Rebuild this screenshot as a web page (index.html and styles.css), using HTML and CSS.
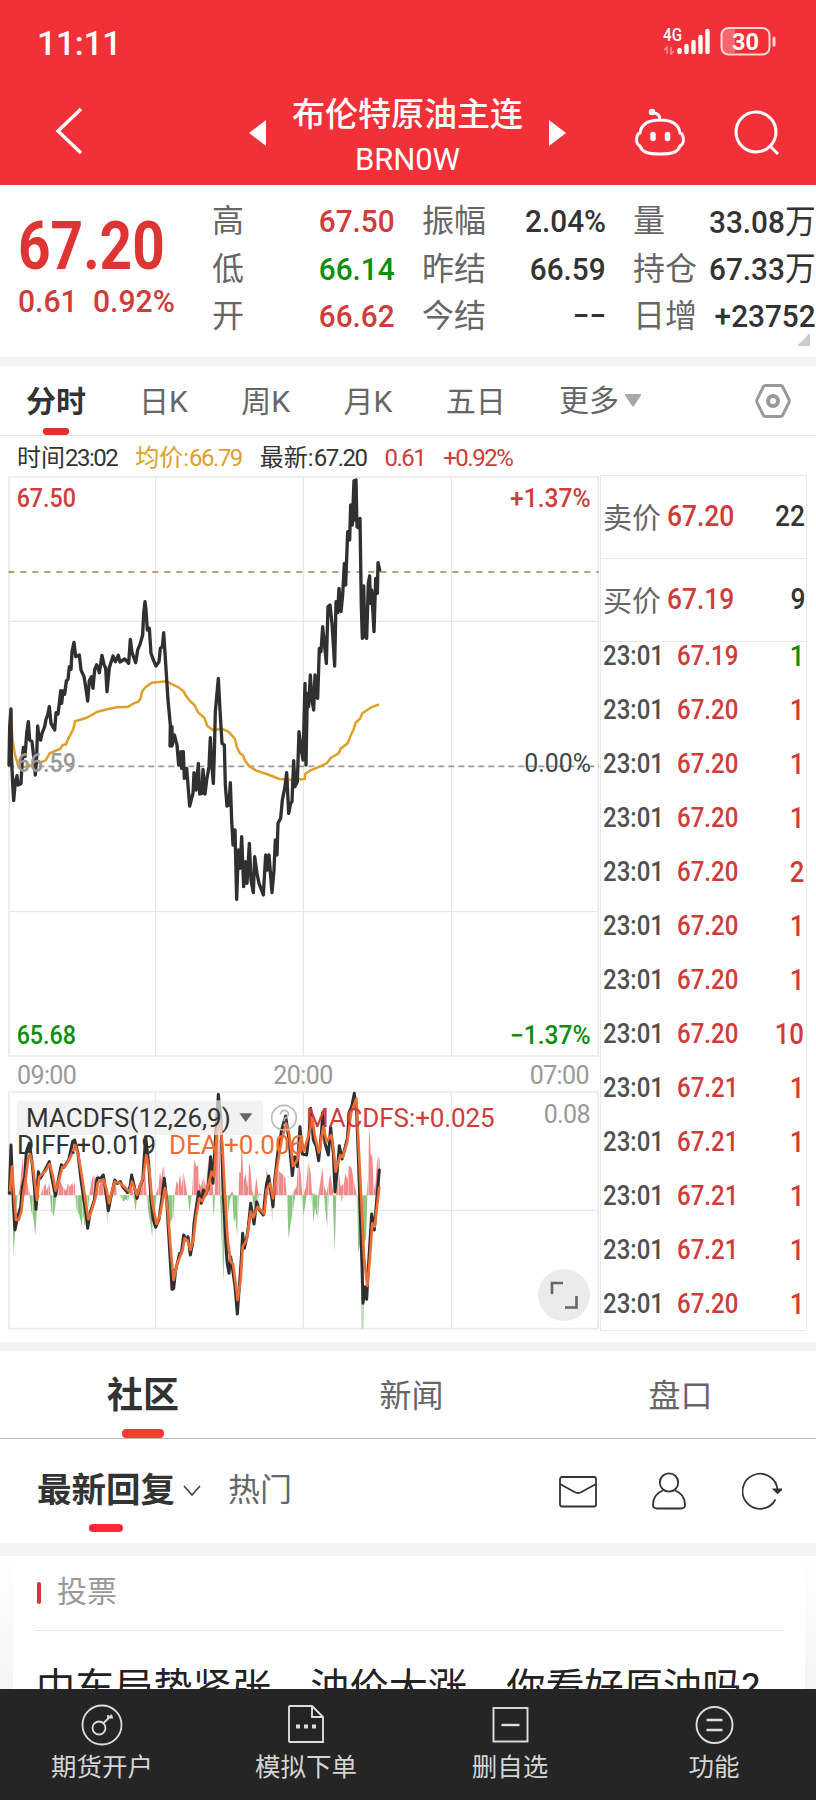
FILE: index.html
```html
<!DOCTYPE html>
<html lang="zh-CN">
<head>
<meta charset="utf-8">
<title>布伦特原油主连</title>
<link rel="stylesheet" href="styles.css">
</head>
<body>
<header class="top">
  <div class="status">
    <span class="clock">11:11</span>
    <svg class="signal" width="116" height="40" viewBox="660 22 116 40">
      <text x="662" y="41" font-size="18" font-weight="500" fill="#fff" textLength="19" lengthAdjust="spacingAndGlyphs">4G</text>
      <g stroke="#ff9a9e" stroke-width="1.3" fill="none"><path d="M666 54V47l-3 3M670 47v7l3-3"/></g>
      <g stroke="#fff" stroke-width="4.4" stroke-linecap="round"><path d="M678.5 50v2M685.5 46v6M692.5 42v10M699.500 37v15M706.500 31v21"/></g>
      <path d="M734 29h-7q-6 0-6 6v12q0 6 6 6h7z" fill="#f4686c"/>
      <rect x="720.500" y="28" width="48" height="26.500" rx="7" fill="none" stroke="#ffd5d6" stroke-width="2"/>
      <path d="M773 38v7" stroke="#ffd5d6" stroke-width="3" stroke-linecap="round"/>
      <text x="731" y="50" font-size="24" font-weight="700" fill="#fff" textLength="27" lengthAdjust="spacingAndGlyphs">30</text>
    </svg>
  </div>
  <nav class="nav">
    <svg class="back" width="30" height="50" viewBox="0 0 30 50"><path d="M26 4L3 26l23 22" fill="none" stroke="#fff" stroke-width="3.400"/></svg>
    <svg class="tri-l" width="17" height="26" viewBox="0 0 17 26"><path d="M17 0v26L0 13z" fill="#fff"/></svg>
    <div class="title"><div class="name">布伦特原油主连</div><div class="code">BRN0W</div></div>
    <svg class="tri-r" width="17" height="26" viewBox="0 0 17 26"><path d="M0 0v26l17-13z" fill="#fff"/></svg>
    <svg class="robot" width="52" height="48" viewBox="633 108 52 48" fill="none" stroke="#fff" stroke-width="3">
      <path d="M659 120c14 0 19 6 20 13c4 1 5 11 0 13c-2 6-7 8-20 8s-18-2-20-8c-5-2-4-12 0-13c1-7 6-13 20-13zM659 120c0-4-2-7-7-7"/>
      <circle cx="651" cy="112" r="2.500" fill="#fff" stroke-width="1.500"/>
      <path d="M652 134.500v4M666.500 134.500v4" stroke-width="5.500" stroke-linecap="round"/>
    </svg>
    <svg class="search" width="46" height="46" viewBox="732 109 46 46" fill="none" stroke="#fff" stroke-width="3"><circle cx="755" cy="132" r="20"/><path d="M769 146l8 8"/></svg>
  </nav>
</header>

<section class="quote">
  <div class="last">
    <div class="price"><span>67.20</span></div>
    <div class="delta"><span>0.61</span><span>0.92%</span></div>
  </div>
  <div class="stats">
    <div class="stat"><span>高</span><b class="up">67.50</b></div>
    <div class="stat"><span>振幅</span><b>2.04%</b></div>
    <div class="stat"><span>量</span><b>33.08<i>万</i></b></div>
    <div class="stat"><span>低</span><b class="down">66.14</b></div>
    <div class="stat"><span>昨结</span><b>66.59</b></div>
    <div class="stat"><span>持仓</span><b>67.33<i>万</i></b></div>
    <div class="stat"><span>开</span><b class="up">66.62</b></div>
    <div class="stat"><span>今结</span><b class="none">−−</b></div>
    <div class="stat"><span>日增</span><b>+23752</b></div>
  </div>
  <svg class="corner" width="13" height="13" viewBox="0 0 13 13"><path d="M13 0v13H0z" fill="#ccc"/></svg>
</section>

<div class="tabs">
  <span class="tab on">分时</span><span class="tab">日K</span><span class="tab">周K</span><span class="tab">月K</span><span class="tab">五日</span><span class="tab more">更多<svg width="16" height="13" viewBox="0 0 16 13"><path d="M1 0h14q2 0 .5 2L9 12q-1 1-2 0L.5 2Q-1 0 1 0z" fill="#a8a8a8"/></svg></span>
  <svg class="gear" width="36" height="36" viewBox="0 0 36 36" fill="none" stroke="#999" stroke-width="3"><path d="M10.500 2.500h15q1.500 0 2 1l6.500 13q.500 1.500 0 3l-6.500 13q-.500 1-2 1h-15q-1.500 0-2-1L2 19.500q-.500-1.500 0-3l6.500-13q.500-1 2-1z"/><circle cx="18" cy="18" r="5" stroke-width="4"/></svg>
</div>

<div class="info"><span>时间<em>23:02</em></span><span class="avg">均价:<em>66.79</em></span><span>最新:<em>67.20</em></span><span class="up"><em>0.61</em></span><span class="up"><em>+0.92%</em></span></div>

<main class="market">
  <div class="charts">
    <svg class="minute" width="600" height="585" viewBox="0 15 1800 1755">
      <g stroke="#e2e2e2" stroke-width="3" fill="none"><path d="M467 20V1758M910 20V1758M1354 20V1758M25 454H1795M25 1325H1795"/></g>
      <path d="M27 1758V21H1795V1758z" fill="none" stroke="#e9e9e9" stroke-width="5"/>
      <path d="M25 306H1797" stroke="#b5a272" stroke-width="5.500" stroke-dasharray="18 18"/>
      <path d="M25 889H1797" stroke="#999" stroke-width="5" stroke-dasharray="18 12"/>
      <path d="M32 720L38 810L44 850L56 893L76 890L100 884L120 878L137 871L149 850L180 837L188 825L198 823L204 808L220 777L225 754L258 744L293 725L325 717L350 712L385 710L400 701L415 695L422 685L426 665L436 652L455 638L500 634L520 645L534 651L551 664L557 676L570 693L583 705L595 728L613 743L622 768L640 781L664 776L685 785L705 807L711 833L720 850L729 856L734 870L747 888L767 901L800 912L838 927L870 929L914 927L916 911L930 902L959 890L980 880L993 863L1016 850L1022 836L1043 820L1053 794L1060 780L1067 758L1080 746L1087 730L1112 713L1137 703" fill="none" stroke="#dea02a" stroke-width="7.500"/>
      <path d="M27 885L29 770L33 717L34 850L38 940L41 992L46 935L51 917L54 945L63 941L66 880L70 832L75 860L80 790L85 755L89 810L96 815L101 860L106 915L110 860L113 768L117 805L122 810L126 790L134 770L138 748L143 735L148 710L153 760L164 780L168 728L174 732L178 700L182 662L185 700L189 663L194 673L199 633L204 628L208 590L213 598L216 545L222 517L227 560L238 555L243 600L252 620L257 650L263 693L268 632L274 620L279 655L284 598L290 584L298 608L306 556L312 584L317 594L321 665L328 593L339 558L346 575L355 556L360 576L374 567L386 580L391 508L396 548L407 578L413 540L421 520L428 495L431 430L435 395L438 420L442 480L448 475L453 550L461 572L468 588L477 575L481 535L487 530L491 488L497 580L504 690L511 765L510 828L516 770L516 828L523 795L531 825L536 885L543 845L545 895L550 845L553 925L560 895L569 1008L575 985L579 970L582 908L588 960L595 880L599 972L606 970L609 898L615 972L620 930L627 890L631 803L635 880L640 940L643 850L646 725L655 625L660 720L666 820L673 825L676 945L681 1008L687 1005L691 938L695 1050L699 1125L705 1080L710 1288L715 1140L720 1195L725 1100L731 1250L736 1175L741 1240L748 1120L753 1230L760 1268L764 1160L771 1210L777 1240L784 1258L790 1275L797 1155L802 1200L807 1155L816 1268L822 1200L826 1110L831 1155L834 1060L842 1045L847 990L855 950L860 908L866 1030L872 1000L876 995L881 872L885 950L892 935L897 785L904 840L909 870L915 640L918 885L922 670L926 710L931 615L936 690L941 720L945 615L948 680L953 685L958 535L963 545L968 470L973 520L979 580L984 410L990 405L996 460L1004 588L1008 395L1013 428L1017 355L1023 425L1028 375L1033 280L1037 345L1043 185L1049 210L1052 105L1057 165L1062 32L1063 150L1065 32L1068 30L1071 170L1077 175L1080 145L1084 410L1087 505L1091 348L1095 500L1100 505L1105 340L1109 318L1111 400L1115 360L1122 485L1127 325L1132 370L1134 278L1139 300" fill="none" stroke="#303030" stroke-width="10" stroke-linejoin="round" stroke-linecap="round"/>
      <g class="lbl">
        <text class="c-up" x="50" y="110" textLength="178" lengthAdjust="spacingAndGlyphs">67.50</text>
        <text class="c-up" x="1530" y="110" textLength="242" lengthAdjust="spacingAndGlyphs">+1.37%</text>
        <text class="c-gray" x="50" y="906" textLength="178" lengthAdjust="spacingAndGlyphs">66.59</text>
        <text class="c-dark" x="1573" y="906" textLength="200" lengthAdjust="spacingAndGlyphs">0.00%</text>
        <text class="c-down" x="50" y="1722" textLength="178" lengthAdjust="spacingAndGlyphs">65.68</text>
        <text class="c-down" x="1530" y="1722" textLength="242" lengthAdjust="spacingAndGlyphs">−1.37%</text>
      </g>
    </svg>
    <svg class="macd" width="600" height="272" viewBox="0 60 1800 816">
      <defs>
        <pattern id="bars-up" width="15" height="20" patternUnits="userSpaceOnUse"><path d="M0 0H15V20H0z" fill="#f08a8b"/><path d="M9 0h3v20H9z" fill="#f8bfc0"/></pattern>
        <pattern id="bars-down" width="15" height="20" patternUnits="userSpaceOnUse"><path d="M0 0H15V20H0z" fill="#8cc682"/><path d="M6 0h3v20H6z" fill="#bfe0b9"/></pattern>
      </defs>
      <g stroke="#e2e2e2" stroke-width="3"><path d="M467 157V866M910 157V866M1354 157V866M25 511H1795"/></g>
      <path d="M27 156H1795V866H27z" fill="none" stroke="#e9e9e9" stroke-width="5"/>
      <path d="M27 466L33 300L38 420L40 466zM55 466L60 440L65 380L69 350L73 400L77 375L80 420L84 440L90 466zM122 466L128 448L136 430L140 452L148 428L152 466zM170 466L178 415L188 440L198 452L204 430L210 440L217 428L220 440L225 425L226 466zM268 466L276 415L282 404L287 430L292 400L298 440L308 402L312 440L318 466zM335 466L341 445L348 430L350 466zM388 466L394 436L398 450L404 466zM412 466L422 440L428 400L433 350L438 440L440 466zM467 466L475 440L480 395L484 420L488 385L492 378L496 440L500 466zM524 466L530 422L535 435L540 405L545 440L550 395L556 430L562 466zM576 466L580 390L584 358L588 380L595 375L598 430L603 440L610 412L618 440L626 350L633 345L636 410L641 466L644 466L650 280L654 180L658 300L662 466zM688 466L696 455L704 466zM715 466L718 395L722 400L725 305L731 425L736 400L742 440L748 368L751 385L756 450L761 466zM763 466L769 412L775 460L790 466L797 440L800 385L805 420L812 440L820 466L826 420L832 360L838 395L844 400L850 405L856 415L860 466zM876 466L883 450L890 440L895 350L902 400L907 466L910 466L918 440L925 365L932 400L936 460L955 466L962 420L967 385L973 440L980 460L985 430L991 402L997 440L1002 466zM1008 466L1017 400L1022 440L1032 430L1036 400L1042 420L1046 375L1055 385L1063 430L1070 466zM1100 466L1104 420L1106 300L1109 268L1112 340L1117 350L1121 430L1125 450L1130 380L1135 345L1139 360L1140 466z" fill="url(#bars-up)"/>
      <path d="M36 466L41 650L46 560L50 500L54 466zM88 466L94 515L100 530L106 588L110 515L115 480L120 466zM150 466L154 515L160 530L166 500L169 466zM226 466L230 510L238 525L245 558L250 525L254 560L259 520L264 515L268 466zM318 466L322 555L328 490L334 466zM360 466L370 485L378 478L384 484L388 466zM400 466L407 512L412 466zM440 466L445 515L452 555L457 594L462 530L468 480L470 466zM500 466L506 580L512 545L520 530L524 466zM563 466L569 515L575 466zM637 466L641 530L645 466zM660 466L665 600L670 725L674 600L680 610L684 520L690 480L696 466L702 550L706 530L712 595L716 466zM755 466L762 500L767 480L773 480L777 466zM812 466L817 548L822 466zM860 466L866 598L872 550L879 510L886 466zM904 466L911 528L914 505L920 466zM934 466L941 548L945 500L950 525L954 535L959 466zM972 466L978 530L982 565L986 466zM998 466L1004 636L1009 466zM1022 466L1026 488L1030 466zM1070 466L1075 640L1082 600L1085 866L1090 866L1093 610L1098 595L1103 466z" fill="url(#bars-down)"/>
      <path d="M28 460L33 315L40 490L45 570L52 535L62 500L67 440L74 412L79 335L88 310L96 365L103 440L108 508L115 395L121 415L135 390L148 365L155 410L166 468L175 420L184 374L191 382L206 360L218 305L224 300L234 340L243 420L250 470L258 520L263 565L270 520L283 480L291 415L304 413L310 405L318 460L325 512L332 475L344 420L352 430L361 425L368 440L383 458L390 440L395 405L402 435L411 475L419 440L428 420L437 290L446 370L453 480L459 535L467 562L477 538L485 480L493 415L500 480L510 650L516 748L521 746L527 690L539 640L544 640L551 585L558 600L564 590L571 645L578 610L582 550L589 500L596 455L604 490L610 450L616 465L624 445L632 350L639 430L646 300L655 163L663 240L669 450L677 600L681 665L687 700L692 650L698 690L705 740L712 822L718 740L723 670L728 580L733 625L741 590L745 560L752 490L762 552L770 485L777 508L790 525L796 460L800 430L806 408L812 450L819 500L824 420L833 340L845 270L857 228L867 300L877 407L884 350L892 380L900 260L907 342L920 345L928 270L932 205L940 300L949 320L956 362L965 270L968 218L975 310L985 345L992 262L1000 340L1005 456L1012 390L1018 317L1026 357L1036 320L1042 295L1048 215L1055 200L1063 160L1070 220L1076 380L1082 550L1086 680L1089 790L1096 740L1100 778L1107 650L1115 522L1123 570L1130 480L1138 390" fill="none" stroke="#303030" stroke-width="9" stroke-linejoin="round" stroke-linecap="round"/>
      <path d="M30 455L36 380L41 450L48 540L56 540L64 515L70 460L78 410L84 360L90 342L98 375L105 430L111 480L118 410L137 392L149 372L158 405L167 452L177 420L187 382L196 378L212 350L226 315L236 350L246 410L254 465L265 538L272 520L286 475L293 428L310 418L320 450L327 490L344 425L362 430L370 438L388 455L396 425L411 465L421 435L430 410L439 345L448 390L457 490L470 552L480 525L495 444L504 520L514 650L521 720L532 670L548 630L554 595L563 602L571 630L580 600L588 530L598 475L607 484L620 455L635 395L643 410L650 280L660 235L668 330L674 450L683 600L692 665L699 672L707 730L713 780L722 720L728 620L740 600L752 515L760 532L773 500L793 522L800 450L810 430L819 475L828 400L845 300L858 250L867 280L879 378L892 360L903 290L912 332L930 270L936 232L945 290L957 338L970 260L980 305L994 285L1001 330L1007 395L1021 345L1028 352L1042 305L1053 220L1069 175L1075 300L1083 460L1092 650L1102 738L1110 650L1117 550L1124 560L1131 500L1138 440" fill="none" stroke="#ee6d35" stroke-width="8" stroke-linejoin="round"/>
      <rect x="51" y="181" width="738" height="104" rx="9" fill="#ececec" fill-opacity=".7"/>
      <path d="M718 220h39l-20 26z" fill="#666"/>
      <g fill="none" stroke="#bbb" stroke-width="5"><circle cx="852" cy="233" r="37"/><path d="M841 224q2-13 12-13q13 1 12 13q-1 8-12 12v8M853 251v7"/></g>
    </svg>
    <div class="axis"><span>09:00</span><span>20:00</span><span>07:00</span></div>
    <div class="legend">
      <span class="ind">MACDFS(12,26,9)</span><span class="m">MACDFS:+0.025</span><span class="mx">0.08</span>
      <span class="diff">DIFF:+0.019</span><span class="dea">DEA:+0.006</span>
    </div>
    <div class="full"><svg width="52" height="52" viewBox="0 0 52 52"><circle cx="26" cy="26" r="26" fill="#ebebeb"/><path d="M14 25V14h11M38.500 27v11.500H27" fill="none" stroke="#666" stroke-width="2.600"/></svg></div>
  </div>
  <aside class="tape">
    <div class="book"><span>卖价</span><b class="up">67.20</b><b class="vol">22</b></div>
    <div class="book"><span>买价</span><b class="up">67.19</b><b class="vol">9</b></div>
    <div class="trades">
      <div class="trade"><span>23:01</span><b>67.19</b><b class="q down">1</b></div>
      <div class="trade"><span>23:01</span><b>67.20</b><b class="q">1</b></div>
      <div class="trade"><span>23:01</span><b>67.20</b><b class="q">1</b></div>
      <div class="trade"><span>23:01</span><b>67.20</b><b class="q">1</b></div>
      <div class="trade"><span>23:01</span><b>67.20</b><b class="q">2</b></div>
      <div class="trade"><span>23:01</span><b>67.20</b><b class="q">1</b></div>
      <div class="trade"><span>23:01</span><b>67.20</b><b class="q">1</b></div>
      <div class="trade"><span>23:01</span><b>67.20</b><b class="q">10</b></div>
      <div class="trade"><span>23:01</span><b>67.21</b><b class="q">1</b></div>
      <div class="trade"><span>23:01</span><b>67.21</b><b class="q">1</b></div>
      <div class="trade"><span>23:01</span><b>67.21</b><b class="q">1</b></div>
      <div class="trade"><span>23:01</span><b>67.21</b><b class="q">1</b></div>
      <div class="trade"><span>23:01</span><b>67.20</b><b class="q">1</b></div>
    </div>
  </aside>
</main>

<div class="sections"><span class="sec on">社区</span><span class="sec">新闻</span><span class="sec">盘口</span></div>

<div class="filter">
  <span class="latest">最新回复</span>
  <svg class="chev" width="18" height="12" viewBox="0 0 18 12"><path d="M1 1l8 9 8-9" fill="none" stroke="#444" stroke-width="1.700"/></svg>
  <span class="hot">热门</span>
  <svg class="mail" width="38" height="32" viewBox="0 0 38 32" fill="none" stroke="#333" stroke-width="1.800"><rect x="1" y="1" width="36" height="29.500" rx="2"/><path d="M1 8l14.500 8q3.500 2 7 0L37 8"/></svg>
  <svg class="person" width="34" height="38" viewBox="0 0 34 38" fill="none" stroke="#333" stroke-width="1.800"><circle cx="17" cy="10.500" r="9.200"/><path d="M11 18.500C4 21 1 27 1 33q0 3.500 4 3.500h24q4 0 4-3.500c0-6-3-12-10-14.500"/></svg>
  <svg class="refresh" width="40" height="38" viewBox="0 0 40 38" fill="none" stroke="#333" stroke-width="1.800"><path d="M33.500 27.500A17.500 17.500 0 1 1 35.500 18"/><path d="M32 17.500h7.500L35.500 21z" fill="#333"/></svg>
</div>

<section class="feed">
  <article class="card">
    <div class="vote">投票</div>
    <h2>中东局势紧张，油价大涨，你看好原油吗?</h2>
  </article>
</section>

<footer class="bar">
  <div><svg width="42" height="42" viewBox="0 0 42 42" fill="none" stroke="#ddd" stroke-width="1.800"><circle cx="21" cy="21" r="19.500"/><circle cx="18" cy="24" r="6.500"/><path d="M22.500 19L31 11M27 14.500V11M29 13.500h3"/></svg><span>期货开户</span></div>
  <div><svg width="42" height="42" viewBox="0 0 42 42" fill="none" stroke="#ddd" stroke-width="1.900"><path d="M5 2h22l11 11v25H5q-1 0-1-1V3q0-1 1-1zM27 2v11h11"/><path d="M11 22.500h4M19 22.500h4M27 22.500h4" stroke-width="4"/></svg><span>模拟下单</span></div>
  <div><svg width="42" height="42" viewBox="0 0 42 42" fill="none" stroke="#ddd" stroke-width="1.900"><rect x="4.500" y="4" width="34" height="33.500"/><path d="M12.500 21h18" stroke-width="2.400"/></svg><span>删自选</span></div>
  <div><svg width="42" height="42" viewBox="0 0 42 42" fill="none" stroke="#ddd" stroke-width="1.900"><circle cx="21.500" cy="21" r="18"/><path d="M13.500 16h16M13.500 26h16" stroke-width="2.400"/></svg><span>功能</span></div>
</footer>
</body>
</html>
```
FILE: styles.css
```css
* { box-sizing: border-box; }
body {
  margin: 0; width: 816px; height: 1800px; overflow: hidden; background: #fff; color: #333;
  display: flex; flex-direction: column;
  font-family: Roboto, "Noto Sans CJK SC", sans-serif;
}
body > * { flex: none; }
svg { display: block; flex: none; }
b, i, em { font-style: normal; font-weight: 500; }
.up { color: #cf3c3a; }
.down { color: #0b8e0b; }

.top { height: 185px; background: #f13038; color: #fff; }
.status { height: 72px; padding: 14px 39px 0 37px; display: flex; justify-content: space-between; align-items: center; }
.clock { font-size: 34px; font-weight: 500; letter-spacing: -.4px; }
.signal { margin-top: -2px; }
.nav { height: 113px; display: flex; align-items: flex-start; }
.back { margin: 33px 0 0 55px; }
.tri-l { margin: 48px 0 0 164px; }
.tri-r { margin-top: 48px; }
.title { width: 283px; padding-top: 20px; text-align: center; white-space: nowrap; }
.name { font-size: 33px; line-height: 46px; font-weight: 500; }
.code { font-size: 31px; line-height: 44px; letter-spacing: -.1px; }
.robot { margin: 36px 0 0 68px; }
.search { margin: 37px 0 0 47px; }

.quote { height: 181px; border-bottom: 9px solid #f4f4f4; display: flex; position: relative; }
.last { width: 212px; padding: 25px 0 0 18px; color: #de3534; white-space: nowrap; }
.price { font-size: 66px; line-height: 74px; font-weight: 700; }
.price span { display: inline-block; transform: scaleX(.86); transform-origin: left; }
.delta { font-size: 32px; line-height: 36px; font-weight: 500; display: flex; color: #cf3c3a; }
.delta span { transform: scaleX(.94); transform-origin: left; width: 75px; margin-top: -1px; }
.stats { padding-top: 13px; display: grid; grid-template-columns: 183px 184px 183px; grid-auto-rows: 47.5px; column-gap: 27px; height: 160px; }
.stat { display: flex; justify-content: space-between; align-items: center; font-size: 32px; color: #666; white-space: nowrap; line-height: 47px; }
.stat b { color: #333; transform: scaleX(.93); transform-origin: right; }
.stat i { font-weight: 400; font-size: 33px; }
.stat b.up { color: #cf3c3a; }
.stat b.down { color: #0b8e0b; }
.corner { position: absolute; right: 6px; top: 148px; }

.tabs { height: 70px; border-bottom: 1px solid #e3e3e3; display: flex; align-items: center; padding: 0 25px 0 26px; font-size: 30px; color: #666; }
.tab { height: 69px; line-height: 72px; margin-right: 53.400px; white-space: nowrap; }
.tab.on { color: #333; font-weight: 700; position: relative; margin-right: 53px; }
.tab.on::after { content: ""; position: absolute; left: 17px; bottom: 0; width: 26px; height: 7px; border-radius: 3px; background: #e03131; }
.more { display: flex; align-items: center; gap: 6px; }
.gear { margin-left: auto; }

.info { height: 39px; padding: 5px 0 0 17px; display: flex; gap: 18px; align-items: center; font-size: 24px; line-height: 34px; white-space: nowrap; }
.info em { letter-spacing: -1.500px; font-weight: 400; }
.avg { color: #dea02a; }

.market { height: 876px; border-bottom: 9px solid #f4f4f4; display: flex; }
.charts { width: 600px; height: 857px; position: relative; }
.minute { height: 585px; }
.lbl { font-size: 75px; font-weight: 500; }
.c-up { fill: #cf3c3a; }
.c-gray { fill: #999; }
.c-dark { fill: #444; font-weight: 400; }
.c-down { fill: #0b8e0b; }
.axis { position: absolute; left: 17px; top: 583px; width: 572px; display: flex; justify-content: space-between; font-size: 25px; line-height: 36px; letter-spacing: -.6px; color: #999; }
.legend { position: absolute; left: 17px; top: 630px; width: 573px; height: 60px; display: grid; grid-template-columns: 152px 137px 1fr auto; grid-template-rows: 27px 27px; font-size: 26px; line-height: 27px; white-space: nowrap; color: #333; }
.ind { grid-column: 1 / 3; padding-left: 9px; }
.m { color: #cf3c3a; letter-spacing: -.1px; }
.mx { color: #999; font-size: 25px; line-height: 20px; letter-spacing: -.6px; }
.diff { grid-column: 1; }
.dea { grid-column: 2; color: #ee6d35; }
.full { position: absolute; left: 538px; top: 794px; }

.tape { width: 207px; height: 856px; border: 1px solid #e9e9e9; white-space: nowrap; overflow: hidden; }
.book { height: 83px; border-bottom: 1px solid #e9e9e9; display: flex; align-items: center; padding: 0 1px 2px 2px; font-size: 29px; color: #666; }
.book b { transform: scaleX(.91); transform-origin: left; margin-left: 6px; }
.book .vol { margin-left: auto; color: #333; transform-origin: right; }
.trades { margin-top: -13px; }
.trade { height: 54px; display: flex; align-items: center; padding: 0 2px; font-size: 27px; }
.trade span { width: 74px; color: #505050; font-weight: 500; transform: scaleX(.89); transform-origin: left; }
.trade b { color: #cf3c3a; transform: scaleX(.89); transform-origin: left; }
.trade .q { margin-left: auto; font-size: 29px; transform-origin: right; margin-top: -1px; }
.trade .q.down { color: #0b8e0b; }

.sections { height: 88px; border-bottom: 1px solid #bbb; display: flex; font-size: 32px; color: #666; line-height: 90px; }
.sec { flex: none; width: 287px; text-align: center; white-space: nowrap; }
.sec.on { width: 286px; font-size: 36px; font-weight: 700; color: #333; position: relative; }
.sec.on + .sec { width: 251px; }
.sec.on::after { content: ""; position: absolute; left: 122px; bottom: 0; width: 42px; height: 9px; border-radius: 4px; background: #f93a30; }
.filter { height: 117px; border-bottom: 13px solid #f4f4f4; display: flex; padding-left: 37px; line-height: 103px; white-space: nowrap; }
.latest { font-size: 34.500px; font-weight: 700; color: #333; position: relative; width: 138px; }
.latest::after { content: ""; position: absolute; left: 52px; top: 85px; width: 34px; height: 8px; border-radius: 4px; background: #ff2638; }
.chev { margin: 46px 0 0 8px; }
.hot { margin-left: 27px; font-size: 32px; color: #666; }
.mail { margin: 37px 0 0 267px; }
.person { margin: 33px 0 0 55px; }
.refresh { margin: 33px 0 0 56px; }

.feed { height: 133px; overflow: hidden; padding: 0 11px 0 13px; background: linear-gradient(#fff, #f4f4f4); }
.card { height: 133px; background: #fff; padding: 0 22px; }
.vote { height: 75px; border-bottom: 1px solid #e8e8e8; padding: 0 0 0 22px; font-size: 30px; line-height: 71px; color: #999; position: relative; }
.vote::before { content: ""; position: absolute; left: 2px; top: 26px; width: 4px; height: 22px; border-radius: 2px; background: #dd2f3e; }
h2 { margin: 28px 0 0 1px; font-size: 39.200px; line-height: 58px; font-weight: 400; color: #222; white-space: nowrap; }

.bar { height: 111px; background: #252525; display: grid; grid-template-columns: repeat(4, 204px); color: #d4d4d4; }
.bar div { display: flex; flex-direction: column; align-items: center; padding-top: 15px; font-size: 25.500px; line-height: 38px; white-space: nowrap; }
.bar span { margin-top: 2px; }
```
